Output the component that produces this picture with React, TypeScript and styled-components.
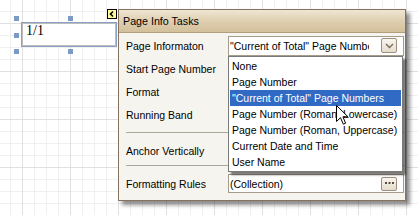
import { styled, createGlobalStyle } from "styled-components";

const GlobalStyle = createGlobalStyle`
  html, body {
    margin: 0;
    padding: 0;
    background: #fff;
  }
  body {
    font-family: "Liberation Sans", Arial, sans-serif;
  }
`;

const UI_FONT = `"Liberation Sans", Arial, sans-serif`;

const Canvas = styled.div`
  position: relative;
  width: 418px;
  height: 215px;
  overflow: hidden;
  background-color: #fff;
  background-image: linear-gradient(to right, #e0e0e0 1px, transparent 1px),
    linear-gradient(to bottom, #e0e0e0 1px, transparent 1px),
    linear-gradient(to right, #f0f0f0 1px, transparent 1px),
    linear-gradient(to bottom, #f0f0f0 1px, transparent 1px);
  background-size: 48px 48px, 48px 48px, 12px 12px, 12px 12px;
  background-position: 22px 23px;
`;

const ReportLabel = styled.div`
  position: absolute;
  left: 21px;
  top: 22px;
  width: 96px;
  height: 25px;
  box-sizing: border-box;
  border: 1px solid #8aa0c4;
  box-shadow: inset 0 0 0 1px #bdbdbd;
  background: #fff;
  padding: 1px 4px 0;
  font-family: "Liberation Serif", "Times New Roman", serif;
  font-size: 14px;
  line-height: 14px;
  color: #000;
`;

const Handle = styled.div<{ $x: number; $y: number }>`
  position: absolute;
  left: ${(p) => p.$x}px;
  top: ${(p) => p.$y}px;
  width: 5px;
  height: 5px;
  background: #7c9ac6;
`;

const SmartTag = styled.div`
  position: absolute;
  left: 107px;
  top: 9px;
  width: 10px;
  height: 10px;
  box-sizing: border-box;
  border: 1px solid #000;
  background: #ffff9c;
  display: flex;
  align-items: center;
  justify-content: center;
`;

const TaskPanel = styled.div`
  position: absolute;
  left: 118px;
  top: 9px;
  width: 288px;
  height: 192px;
  box-sizing: border-box;
  border: 1px solid #85725f;
  background: #f6f4ee;
  box-shadow: 4px 4px 4px rgba(0, 0, 0, 0.45);
  display: flex;
  flex-direction: column;
  font-family: ${UI_FONT};
  font-size: 10.5px;
  color: #000;
`;

const TitleBar = styled.div`
  height: 22px;
  flex: none;
  border-bottom: 1px solid #b39e7c;
  background: linear-gradient(#efe6d2, #dfcfb0 50%, #d3bf9b);
  display: flex;
  align-items: center;
  padding-left: 4px;
  font-size: 10.7px;
`;

const PanelBody = styled.div`
  padding: 1px 1px 5px 7px;
  display: flex;
  flex-direction: column;
`;

const Row = styled.div`
  height: 23px;
  display: grid;
  grid-template-columns: 102px 1fr;
  align-items: center;
`;

const Separator = styled.div<{ $above: number; $below: number }>`
  height: 1px;
  margin: ${(p) => p.$above}px 0 ${(p) => p.$below}px;
  background: #aca899;
`;

const Editor = styled.div<{ $h?: number }>`
  height: ${(p) => p.$h ?? 20}px;
  box-sizing: border-box;
  border: 1px solid #a69c8c;
  background: #fff;
  display: flex;
  align-items: center;
  padding: 0 6px 0 1px;
`;

const EditorText = styled.span`
  width: 139px;
  flex: none;
  white-space: nowrap;
  overflow: hidden;
`;

const EditorButton = styled.div<{ $h: number }>`
  width: 16px;
  height: ${(p) => p.$h}px;
  flex: none;
  margin-left: auto;
  box-sizing: border-box;
  border: 1px solid #a08e7a;
  border-radius: 2px;
  background: linear-gradient(#f8f5ef, #e5dccd);
  display: flex;
  align-items: center;
  justify-content: center;
`;

const DropList = styled.ul`
  position: absolute;
  left: 228px;
  top: 56px;
  width: 175px;
  margin: 0;
  padding: 1px;
  list-style: none;
  box-sizing: border-box;
  border: 1px solid #7a7a7a;
  background: #fff;
  box-shadow: 3px 3px 2px rgba(0, 0, 0, 0.5);
  font-family: ${UI_FONT};
  font-size: 10.5px;
`;

const DropItem = styled.li<{ $selected?: boolean }>`
  height: 16px;
  line-height: 16px;
  padding-left: 2px;
  white-space: nowrap;
  background: ${(p) => (p.$selected ? "#316ac5" : "transparent")};
  color: ${(p) => (p.$selected ? "#fff" : "#000")};
`;

const Cursor = styled.svg`
  position: absolute;
  left: 336px;
  top: 105px;
`;

const options = [
  "None",
  "Page Number",
  "\"Current of Total\" Page Numbers",
  "Page Number (Roman, Lowercase)",
  "Page Number (Roman, Uppercase)",
  "Current Date and Time",
  "User Name",
];

const App = () => {
  return (
    <>
      <GlobalStyle />
      <Canvas>
        <Handle $x={14} $y={16} />
        <Handle $x={68} $y={16} />
        <Handle $x={14} $y={33} />
        <Handle $x={14} $y={49} />
        <Handle $x={68} $y={49} />
        <ReportLabel>1/1</ReportLabel>
        <SmartTag>
          <svg width="8" height="8" viewBox="0 0 8 8">
            <path d="M5 1.5 L2.5 4 L5 6.5" fill="none" stroke="#000" strokeWidth="1.6" />
          </svg>
        </SmartTag>

        <TaskPanel>
          <TitleBar>Page Info Tasks</TitleBar>
          <PanelBody>
            <Row>
              <span>Page Informaton</span>
              <Editor>
                <EditorText>"Current of Total" Page Numbers</EditorText>
                <EditorButton $h={15}>
                  <svg width="9" height="6" viewBox="0 0 9 6">
                    <path d="M1 1 L4.5 4.5 L8 1" fill="none" stroke="#7a6a58" strokeWidth="1.4" />
                  </svg>
                </EditorButton>
              </Editor>
            </Row>
            <Row>
              <span>Start Page Number</span>
            </Row>
            <Row>
              <span>Format</span>
            </Row>
            <Row>
              <span>Running Band</span>
            </Row>
            <Separator $above={6} $below={6} />
            <Row>
              <span>Anchor Vertically</span>
            </Row>
            <Separator $above={3} $below={6} />
            <Row>
              <span>Formatting Rules</span>
              <Editor $h={19}>
                <EditorText>(Collection)</EditorText>
                <EditorButton $h={14}>
                  <svg width="9" height="3" viewBox="0 0 9 3">
                    <rect x="0" y="0" width="2" height="2" fill="#5a4c3e" />
                    <rect x="3.5" y="0" width="2" height="2" fill="#5a4c3e" />
                    <rect x="7" y="0" width="2" height="2" fill="#5a4c3e" />
                  </svg>
                </EditorButton>
              </Editor>
            </Row>
          </PanelBody>
        </TaskPanel>

        <DropList>
          {options.map((o, i) => (
            <DropItem key={o} $selected={i === 2}>
              {o}
            </DropItem>
          ))}
        </DropList>

        <Cursor width="13" height="21" viewBox="0 0 13 21">
          <path
            d="M0.5 0.5 L0.5 16.5 L4.5 12.7 L7.3 19.2 L9.6 18.2 L6.9 11.8 L12 11.8 Z"
            fill="#fff"
            stroke="#000"
            strokeWidth="1"
            strokeLinejoin="miter"
          />
        </Cursor>
      </Canvas>
    </>
  );
};

export default App;
